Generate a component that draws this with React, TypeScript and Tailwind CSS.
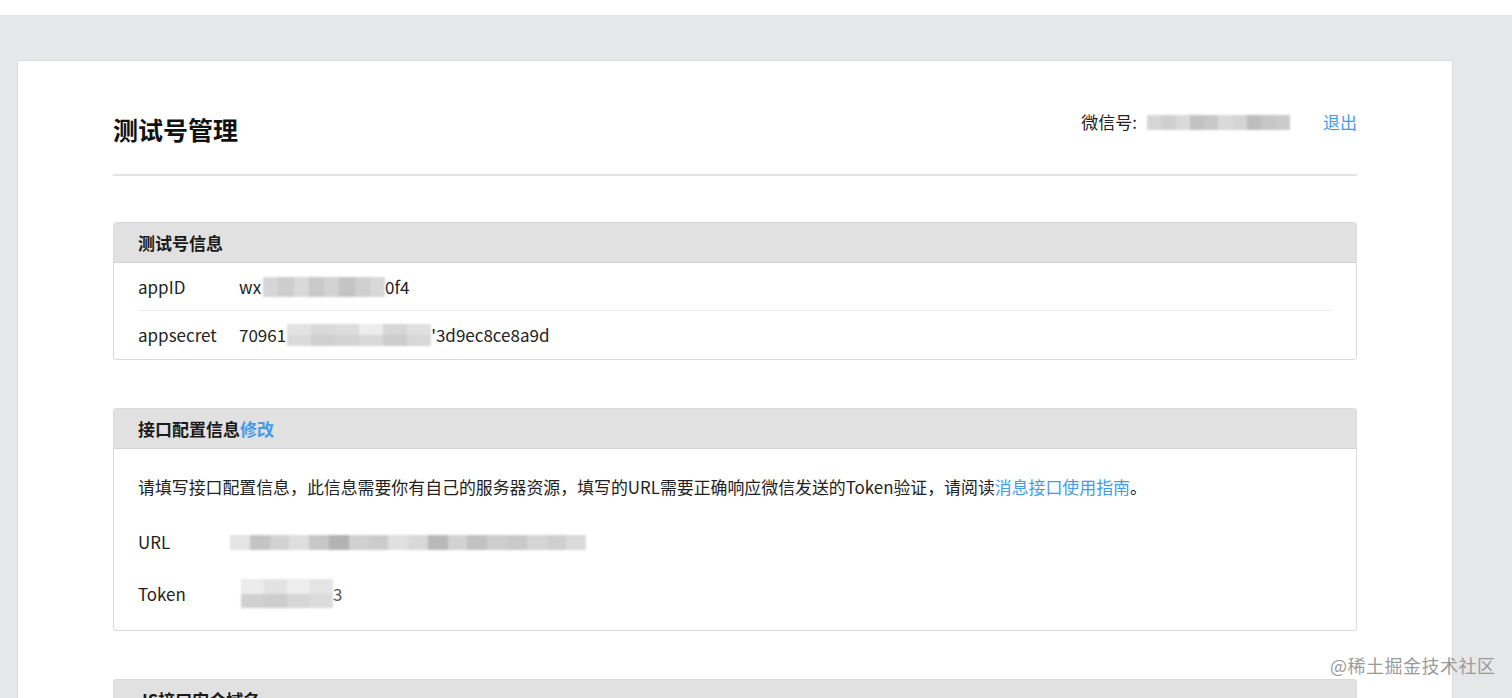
import React from "react";

const FONT = { fontFamily: '"Noto Sans CJK SC", "Noto Sans", sans-serif' };

function Mosaic({
  width,
  height,
  cols,
  rows = 1,
  className = "",
}: {
  width: number;
  height: number;
  cols: string[];
  rows?: number;
  className?: string;
}) {
  const perRow = Math.ceil(cols.length / rows);
  const rowArr: string[][] = [];
  for (let r = 0; r < rows; r++) rowArr.push(cols.slice(r * perRow, (r + 1) * perRow));
  return (
    <span
      className={`inline-flex flex-col align-middle blur-[0.8px] ${className}`}
      style={{ width, height }}
    >
      {rowArr.map((row, i) => (
        <span key={i} className="flex flex-1">
          {row.map((c, j) => (
            <span key={j} className="flex-1" style={{ background: c }} />
          ))}
        </span>
      ))}
    </span>
  );
}

function Panel({
  title,
  children,
}: {
  title: React.ReactNode;
  children?: React.ReactNode;
}) {
  return (
    <div className="border border-[#d9d9d9] rounded-[3px] overflow-hidden bg-white">
      <div className="h-[40px] bg-[#e1e1e1] border-b border-[#d2d2d2] flex items-center pl-6 text-[17px] font-bold text-[#1a1a1a]">
        {title}
      </div>
      {children}
    </div>
  );
}

export default function App() {
  return (
    <div className="relative h-[698px] overflow-hidden bg-[#e6e7e8] text-[#222]" style={FONT}>
      <div className="h-[15px] bg-white" />
      <div className="pt-[45px] pl-[17px] pr-[59px]">
        <div className="bg-white border border-[#dcdcdc] rounded-[2px] px-[95px] pt-[52px] pb-10 min-h-[700px]">
          {/* header */}
          <div className="flex items-start justify-between">
            <h1 className="text-[25px] leading-[32px] font-bold text-[#111]">测试号管理</h1>
            <div className="flex items-center text-[17px] leading-[24px] -mt-[3px]">
              <span className="text-[#222]">微信号:</span>
              <Mosaic
                width={143}
                height={15}
                className="ml-[10px]"
                cols={["#d6d6d6", "#cfcfcf", "#dadada", "#c2c2c2", "#c8c8c8", "#d9d9d9", "#d4d4d4", "#bdbdbd", "#c6c6c6", "#cbcbcb"]}
              />
              <span className="ml-[33px] text-[#459ae9]">退出</span>
            </div>
          </div>
          <div className="mt-[29px] h-[2px] bg-[#e3e3e3]" />

          {/* 测试号信息 */}
          <div className="mt-[46px]">
            <Panel title="测试号信息">
              <div className="px-6 text-[17px]">
                <div className="h-[48px] flex items-center border-b border-[#ececec]">
                  <span className="w-[101px]">appID</span>
                  <span className="flex items-center">
                    wx
                    <Mosaic
                      width={122}
                      height={20}
                      className="ml-[2px]"
                      cols={["#d6d6d6", "#cdcdcd", "#d9d9d9", "#c9c9c9", "#d2d2d2", "#c4c4c4", "#cfcfcf", "#d8d8d8"]}
                    />
                    0f4
                  </span>
                </div>
                <div className="h-[48px] flex items-center">
                  <span className="w-[101px]">appsecret</span>
                  <span className="flex items-center">
                    70961
                    <Mosaic
                      width={144}
                      height={22}
                      className="ml-[1px]"
                      rows={2}
                      cols={["#e2e2e2", "#d9d9d9", "#dcdcdc", "#ededed", "#d6d6d6", "#e0e0e0", "#dadada", "#cfcfcf", "#d3d3d3", "#d8d8d8", "#cccccc", "#d7d7d7"]}
                    />
                    '3d9ec8ce8a9d
                  </span>
                </div>
              </div>
            </Panel>
          </div>

          {/* 接口配置信息 */}
          <div className="mt-12">
            <Panel
              title={
                <span>
                  接口配置信息<span className="text-[#459ae9]">修改</span>
                </span>
              }
            >
              <div className="px-6 pt-[26px] pb-[22px] text-[16.9px] leading-[24px]">
                <p>
                  请填写接口配置信息，此信息需要你有自己的服务器资源，填写的URL需要正确响应微信发送的Token验证，请阅读
                  <span className="text-[#459ae9]">消息接口使用指南</span>。
                </p>
                <div className="mt-[31px] flex items-center">
                  <span className="w-[92px]">URL</span>
                  <Mosaic
                    width={356}
                    height={15}
                    cols={["#e4e4e4", "#c4c4c4", "#d2d2d2", "#dedede", "#c7c7c7", "#b3b3b3", "#d0d0d0", "#cbcbcb", "#e0e0e0", "#d8d8d8", "#b9b9b9", "#d2d2d2", "#c2c2c2", "#cecece", "#c9c9c9", "#d5d5d5", "#cfcfcf", "#dadada"]}
                  />
                </div>
                <div className="mt-[25px] flex items-center">
                  <span className="w-[103px]">Token</span>
                  <Mosaic
                    width={92}
                    height={29}
                    rows={2}
                    cols={["#ececec", "#e2e2e2", "#ededed", "#e4e4e4", "#d0d0d0", "#cdcdcd", "#d6d6d6", "#dcdcdc"]}
                  />
                  <span className="text-[#555]">3</span>
                </div>
              </div>
            </Panel>
          </div>

          {/* JS接口安全域名 */}
          <div className="mt-12">
            <Panel title="JS接口安全域名" />
          </div>
        </div>
      </div>

      <div className="absolute left-[1330px] top-[653px] text-[18px] leading-[24px] text-[#9a9a9a] tracking-[0.5px] pointer-events-none">
        @稀土掘金技术社区
      </div>
    </div>
  );
}
